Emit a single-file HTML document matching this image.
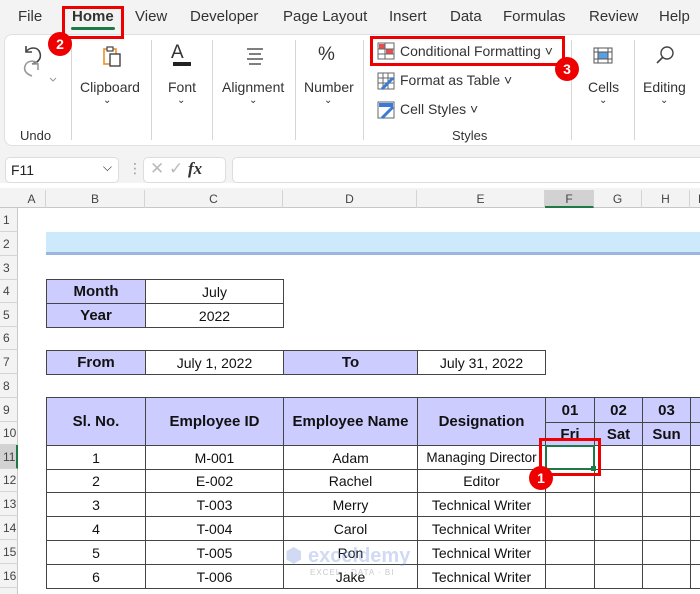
<!DOCTYPE html>
<html><head><meta charset="utf-8"><style>
*{box-sizing:border-box;margin:0;padding:0}
body{width:700px;height:594px;overflow:hidden;background:#fff;font-family:"Liberation Sans","DejaVu Sans",sans-serif;position:relative;color:#222}
.a{position:absolute}
.tab{position:absolute;top:8px;font-size:15px;color:#333}
.grp{position:absolute;font-size:14px;color:#333;text-align:center}
.vs{position:absolute;top:40px;width:1px;height:100px;background:#d6d6d6}
.ch{position:absolute;top:190px;height:18px;font-size:12px;color:#444;text-align:center;line-height:18px;border-right:1px solid #d4d4d4}
.rh{position:absolute;left:0;width:18px;font-size:12px;color:#444;text-align:left;padding-left:3px;border-bottom:1px solid #d4d4d4}
.c{position:absolute;font-size:14px;text-align:center;display:flex;align-items:center;justify-content:center;border:1px solid #444;color:#111}
.h{background:#ccccff;font-weight:bold;font-size:15px}
.gl{position:absolute;background:#e2e2e2}
.badge{position:absolute;width:24px;height:24px;border-radius:50%;background:#e00;color:#fff;font-weight:bold;font-size:14px;text-align:center;line-height:24px}
.red{position:absolute;border:3px solid #e00}
</style></head><body>
<!-- ribbon bg -->
<div class="a" style="left:0;top:0;width:700px;height:183px;background:#f3f3f3"></div>
<div class="tab" style="left:18px">File</div>
<div class="tab" style="left:72px;font-weight:bold">Home</div>
<div class="a" style="left:71px;top:27px;width:44px;height:3px;background:#1e7a45;border-radius:2px"></div>
<div class="tab" style="left:135px">View</div>
<div class="tab" style="left:190px">Developer</div>
<div class="tab" style="left:283px">Page Layout</div>
<div class="tab" style="left:389px">Insert</div>
<div class="tab" style="left:450px">Data</div>
<div class="tab" style="left:503px">Formulas</div>
<div class="tab" style="left:589px">Review</div>
<div class="tab" style="left:659px">Help</div>
<div class="a" style="left:4px;top:34px;width:710px;height:112px;background:#fff;border:1px solid #e0e0e0;border-radius:8px"></div>
<div class="vs" style="left:71px"></div><div class="vs" style="left:151px"></div><div class="vs" style="left:212px"></div><div class="vs" style="left:295px"></div><div class="vs" style="left:363px"></div><div class="vs" style="left:571px"></div><div class="vs" style="left:634px"></div>
<svg class="a" style="left:20px;top:40px" width="40" height="50"><path d="M6 6v6h6M6 12c3-5 12-6 14 1s-4 10-8 11" fill="none" stroke="#444" stroke-width="1.6"/><path d="M18 30v-6h-6M18 24c-3-4-11-4-13 2s4 9 7 10" fill="none" stroke="#999" stroke-width="1.6"/><path d="M30 38l3 3 3-3" fill="none" stroke="#999" stroke-width="1"/></svg>
<div class="grp" style="left:20px;top:128px;font-size:13px">Undo</div>
<svg class="a" style="left:102px;top:45px" width="22" height="22"><rect x="2" y="4" width="12" height="15" fill="none" stroke="#e8902a" stroke-width="1.6"/><rect x="8" y="9" width="10" height="12" fill="#fff" stroke="#444" stroke-width="1.4"/><rect x="5" y="2" width="6" height="4" fill="#fff" stroke="#444" stroke-width="1.2"/></svg>
<div class="grp" style="left:80px;top:79px">Clipboard</div><div class="grp" style="left:103px;top:95px;font-size:10px">⌄</div>
<div class="grp" style="left:171px;top:42px;font-size:19px">A</div><div class="a" style="left:173px;top:62px;width:18px;height:4px;background:#222"></div>
<div class="grp" style="left:168px;top:79px">Font</div><div class="grp" style="left:177px;top:95px;font-size:10px">⌄</div>
<svg class="a" style="left:245px;top:47px" width="20" height="18"><path d="M2 2h16M4 7h12M2 12h16M4 17h12" stroke="#555" stroke-width="1.4"/></svg>
<div class="grp" style="left:222px;top:79px">Alignment</div><div class="grp" style="left:249px;top:95px;font-size:10px">⌄</div>
<div class="grp" style="left:318px;top:44px;font-size:19px">%</div>
<div class="grp" style="left:304px;top:79px">Number</div><div class="grp" style="left:324px;top:95px;font-size:10px">⌄</div>
<svg class="a" style="left:377px;top:42px" width="18" height="18"><rect x="1" y="1" width="16" height="16" fill="#fff" stroke="#666"/><rect x="2" y="2" width="6" height="5" fill="#e05050"/><rect x="9" y="7" width="7" height="5" fill="#e05050"/><path d="M1 7h16M1 12h16M8 1v16" stroke="#666"/></svg>
<div class="grp" style="left:400px;top:43px;text-align:left">Conditional Formatting ˅</div>
<svg class="a" style="left:377px;top:72px" width="18" height="18"><rect x="1" y="1" width="16" height="16" fill="#fff" stroke="#666"/><path d="M1 6h16M1 11h16M6 1v16M11 1v16" stroke="#666"/><path d="M5 17l11-11" stroke="#3a7bd5" stroke-width="3"/></svg>
<div class="grp" style="left:400px;top:72px;text-align:left">Format as Table ˅</div>
<svg class="a" style="left:377px;top:101px" width="18" height="18"><rect x="1" y="1" width="16" height="16" fill="#fff" stroke="#666"/><rect x="2" y="2" width="14" height="4" fill="#3a7bd5"/><path d="M5 17l11-11" stroke="#3a7bd5" stroke-width="3"/></svg>
<div class="grp" style="left:400px;top:101px;text-align:left">Cell Styles ˅</div>
<div class="grp" style="left:452px;top:128px;font-size:13px">Styles</div>
<svg class="a" style="left:593px;top:45px" width="20" height="20"><rect x="1" y="3" width="18" height="15" fill="#fff" stroke="#555"/><rect x="5" y="7" width="10" height="7" fill="#5aa0e0"/><path d="M1 7h18M1 14h18M5 3v15M15 3v15" stroke="#555"/></svg>
<div class="grp" style="left:588px;top:79px">Cells</div><div class="grp" style="left:599px;top:95px;font-size:10px">⌄</div>
<svg class="a" style="left:655px;top:45px" width="20" height="20"><circle cx="12" cy="8" r="6" fill="none" stroke="#444" stroke-width="1.4"/><path d="M8 12l-6 6" stroke="#444" stroke-width="1.6"/></svg>
<div class="grp" style="left:643px;top:79px">Editing</div><div class="grp" style="left:660px;top:95px;font-size:10px">⌄</div>
<!-- formula bar -->
<div class="a" style="left:5px;top:157px;width:114px;height:26px;background:#fff;border:1px solid #ddd;border-radius:5px;font-size:14px;padding:4px 5px">F11<span style="position:absolute;right:6px;top:2px;font-size:12px">⌵</span></div>
<div class="a" style="left:128px;top:160px;color:#999;font-size:14px">⋮</div>
<div class="a" style="left:143px;top:157px;width:83px;height:26px;background:#fff;border:1px solid #ddd;border-radius:5px;font-size:17px;color:#bbb;padding:1px 6px">✕ ✓ <i style="color:#333;font-family:'Liberation Serif',serif;font-weight:bold">fx</i></div>
<div class="a" style="left:232px;top:157px;width:480px;height:26px;background:#fff;border:1px solid #ddd;border-radius:5px"></div>
<!-- headers -->
<div class="a" style="left:0;top:188px;width:700px;height:20px;background:#f3f3f3;border-bottom:1px solid #c8c8c8"></div>
<div class="a" style="left:0;top:208px;width:18px;height:386px;background:#f3f3f3;border-right:1px solid #c8c8c8"></div>
<div class="ch" style="left:18px;width:28px">A</div><div class="ch" style="left:46px;width:99px">B</div><div class="ch" style="left:145px;width:138px">C</div><div class="ch" style="left:283px;width:134px">D</div><div class="ch" style="left:417px;width:128px">E</div><div class="ch" style="left:545px;width:49px;background:#d2d2d2;border-bottom:2px solid #1e7a45">F</div><div class="ch" style="left:594px;width:48px">G</div><div class="ch" style="left:642px;width:48px">H</div><div class="ch" style="left:690px;width:20px">I</div>
<div class="rh" style="top:208px;height:24px;line-height:24px">1</div><div class="rh" style="top:232px;height:24px;line-height:24px">2</div><div class="rh" style="top:256px;height:24px;line-height:24px">3</div><div class="rh" style="top:280px;height:23px;line-height:23px">4</div><div class="rh" style="top:303px;height:24px;line-height:24px">5</div><div class="rh" style="top:327px;height:23px;line-height:23px">6</div><div class="rh" style="top:350px;height:24px;line-height:24px">7</div><div class="rh" style="top:374px;height:24px;line-height:24px">8</div><div class="rh" style="top:398px;height:24px;line-height:24px">9</div><div class="rh" style="top:422px;height:23px;line-height:23px">10</div><div class="rh" style="top:445px;height:24px;line-height:24px;background:#d2d2d2;border-right:2px solid #1e7a45">11</div><div class="rh" style="top:469px;height:23px;line-height:23px">12</div><div class="rh" style="top:492px;height:24px;line-height:24px">13</div><div class="rh" style="top:516px;height:24px;line-height:24px">14</div><div class="rh" style="top:540px;height:24px;line-height:24px">15</div><div class="rh" style="top:564px;height:24px;line-height:24px">16</div>
<!-- blue band -->
<div class="a" style="left:46px;top:232px;width:654px;height:23px;background:#cdeafc;border-bottom:3px solid #9db6e0"></div>
<!-- month/year -->
<div class="c h" style="left:46px;top:279px;width:100px;height:25px">Month</div><div class="c" style="left:145px;top:279px;width:139px;height:25px">July</div>
<div class="c h" style="left:46px;top:303px;width:100px;height:25px">Year</div><div class="c" style="left:145px;top:303px;width:139px;height:25px">2022</div>
<div class="c h" style="left:46px;top:350px;width:100px;height:25px">From</div><div class="c" style="left:145px;top:350px;width:139px;height:25px">July 1, 2022</div>
<div class="c h" style="left:283px;top:350px;width:135px;height:25px">To</div><div class="c" style="left:417px;top:350px;width:129px;height:25px">July 31, 2022</div>
<!-- main table header -->
<div class="c h" style="left:46px;top:397px;width:100px;height:49px">Sl. No.</div>
<div class="c h" style="left:145px;top:397px;width:139px;height:49px">Employee ID</div>
<div class="c h" style="left:283px;top:397px;width:135px;height:49px">Employee Name</div>
<div class="c h" style="left:417px;top:397px;width:129px;height:49px">Designation</div>
<div class="c h" style="left:545px;top:397px;width:50px;height:26px">01</div><div class="c h" style="left:594px;top:397px;width:49px;height:26px">02</div><div class="c h" style="left:642px;top:397px;width:49px;height:26px">03</div><div class="c h" style="left:690px;top:397px;width:30px;height:26px"></div>
<div class="c h" style="left:545px;top:422px;width:50px;height:24px">Fri</div><div class="c h" style="left:594px;top:422px;width:49px;height:24px">Sat</div><div class="c h" style="left:642px;top:422px;width:49px;height:24px">Sun</div><div class="c h" style="left:690px;top:422px;width:30px;height:24px"></div>
<!-- rows -->
<div class="c" style="left:46px;top:445px;width:100px;height:25px">1</div><div class="c" style="left:145px;top:445px;width:139px;height:25px">M-001</div><div class="c" style="left:283px;top:445px;width:135px;height:25px">Adam</div><div class="c" style="left:417px;top:445px;width:129px;height:25px;font-size:13.5px">Managing Director</div><div class="c" style="left:545px;top:445px;width:50px;height:25px"></div><div class="c" style="left:594px;top:445px;width:49px;height:25px"></div><div class="c" style="left:642px;top:445px;width:49px;height:25px"></div><div class="c" style="left:690px;top:445px;width:30px;height:25px"></div>
<div class="c" style="left:46px;top:469px;width:100px;height:24px">2</div><div class="c" style="left:145px;top:469px;width:139px;height:24px">E-002</div><div class="c" style="left:283px;top:469px;width:135px;height:24px">Rachel</div><div class="c" style="left:417px;top:469px;width:129px;height:24px">Editor</div><div class="c" style="left:545px;top:469px;width:50px;height:24px"></div><div class="c" style="left:594px;top:469px;width:49px;height:24px"></div><div class="c" style="left:642px;top:469px;width:49px;height:24px"></div><div class="c" style="left:690px;top:469px;width:30px;height:24px"></div>
<div class="c" style="left:46px;top:492px;width:100px;height:25px">3</div><div class="c" style="left:145px;top:492px;width:139px;height:25px">T-003</div><div class="c" style="left:283px;top:492px;width:135px;height:25px">Merry</div><div class="c" style="left:417px;top:492px;width:129px;height:25px">Technical Writer</div><div class="c" style="left:545px;top:492px;width:50px;height:25px"></div><div class="c" style="left:594px;top:492px;width:49px;height:25px"></div><div class="c" style="left:642px;top:492px;width:49px;height:25px"></div><div class="c" style="left:690px;top:492px;width:30px;height:25px"></div>
<div class="c" style="left:46px;top:516px;width:100px;height:25px">4</div><div class="c" style="left:145px;top:516px;width:139px;height:25px">T-004</div><div class="c" style="left:283px;top:516px;width:135px;height:25px">Carol</div><div class="c" style="left:417px;top:516px;width:129px;height:25px">Technical Writer</div><div class="c" style="left:545px;top:516px;width:50px;height:25px"></div><div class="c" style="left:594px;top:516px;width:49px;height:25px"></div><div class="c" style="left:642px;top:516px;width:49px;height:25px"></div><div class="c" style="left:690px;top:516px;width:30px;height:25px"></div>
<div class="c" style="left:46px;top:540px;width:100px;height:25px">5</div><div class="c" style="left:145px;top:540px;width:139px;height:25px">T-005</div><div class="c" style="left:283px;top:540px;width:135px;height:25px">Ron</div><div class="c" style="left:417px;top:540px;width:129px;height:25px">Technical Writer</div><div class="c" style="left:545px;top:540px;width:50px;height:25px"></div><div class="c" style="left:594px;top:540px;width:49px;height:25px"></div><div class="c" style="left:642px;top:540px;width:49px;height:25px"></div><div class="c" style="left:690px;top:540px;width:30px;height:25px"></div>
<div class="c" style="left:46px;top:564px;width:100px;height:25px">6</div><div class="c" style="left:145px;top:564px;width:139px;height:25px">T-006</div><div class="c" style="left:283px;top:564px;width:135px;height:25px">Jake</div><div class="c" style="left:417px;top:564px;width:129px;height:25px">Technical Writer</div><div class="c" style="left:545px;top:564px;width:50px;height:25px"></div><div class="c" style="left:594px;top:564px;width:49px;height:25px"></div><div class="c" style="left:642px;top:564px;width:49px;height:25px"></div><div class="c" style="left:690px;top:564px;width:30px;height:25px"></div>
<!-- watermark -->
<div class="a" style="left:285px;top:543px;font-size:20px;font-weight:bold;color:rgba(120,150,220,0.35)">⬢ exceldemy</div>
<div class="a" style="left:310px;top:568px;font-size:8px;color:rgba(120,120,120,0.4);letter-spacing:1px">EXCEL · DATA · BI</div>
<!-- selection -->
<div class="a" style="left:545px;top:445px;width:50px;height:25px;border:2px solid #1e7a45"></div>
<div class="a" style="left:591px;top:466px;width:5px;height:5px;background:#1e7a45"></div>
<!-- red annotations -->
<div class="red" style="left:62px;top:6px;width:62px;height:33px"></div>
<div class="badge" style="left:48px;top:32px">2</div>
<div class="red" style="left:370px;top:36px;width:195px;height:30px"></div>
<div class="badge" style="left:555px;top:57px">3</div>
<div class="red" style="left:539px;top:438px;width:62px;height:38px"></div>
<div class="badge" style="left:529px;top:466px">1</div>
</body></html>
